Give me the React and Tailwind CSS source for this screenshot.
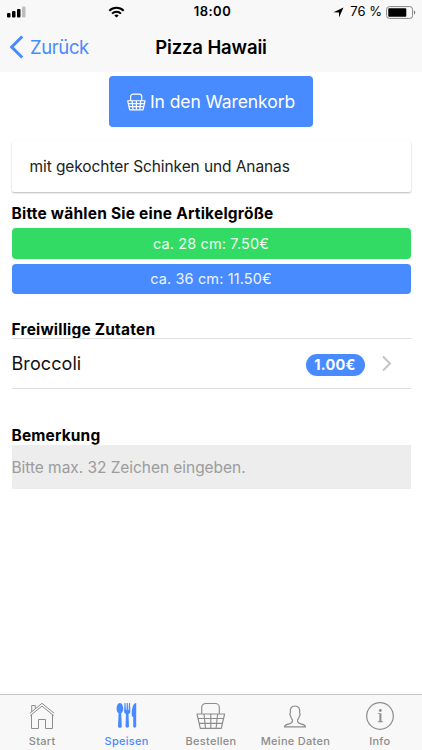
function Basket({ className, strokeWidth = 1.15 }) {
  return (
    <svg className={className} viewBox="0 0 30 28" fill="none" stroke="currentColor" strokeWidth={strokeWidth} strokeLinejoin="round">
      <path d="M5.700 12V5.500a4 4 0 0 1 4-4h9.600a4 4 0 0 1 4 4V12" />
      <path d="M.6 12h28.400M2.300 16.500h25M3.200 21.300h23M1 12l3.300 14.300h21L28.600 12" />
      <path d="M8 12l1.500 14.300M14.800 12v14.300M21.600 12l-1.500 14.300" />
    </svg>
  );
}

function House() {
  return (
    <svg className="h-[28px] w-[28px]" viewBox="0 0 28 28" fill="none" stroke="currentColor" strokeWidth="1">
      <path d="M1.800 12.300 14 2.300l12.200 10" />
      <path d="M2.300 14.600 14 5.100l11.700 9.500" />
      <path d="M3.700 10.700V4.500h3.600v3.200M3.500 13.700V27.500h7V18.500h7v9h7V13.700" />
    </svg>
  );
}

function Cutlery() {
  return (
    <svg className="h-[26px] w-[22px]" viewBox="0 0 22 26" fill="currentColor">
      <path d="M3.900 1C6 1 7.200 3.900 7.200 6.700c0 2.300-.8 3.800-2 4.500l.6 13c.1 2.100-3.900 2.100-3.800 0l.6-13C1.300 10.500.6 9 .6 6.700.6 3.900 1.800 1 3.900 1Z" />
      <path d="M8.500 1h1l.4 7h.6L10.700 1h1.100l.2 7h.6L13 1h1l.4 8c0 1.800-.8 2.600-1.900 3.100l.5 12.100c.1 2-3.600 2-3.500 0L10 12.100C8.900 11.600 8.100 10.800 8.100 9Z" />
      <path d="M20.200 1v23.500c0 1.500-3 1.500-3 0V15c-1-.4-1.500-1.200-1.500-2.600C15.700 7 16.800 1 20.200 1Z" />
    </svg>
  );
}

function Person() {
  return (
    <svg className="h-[24px] w-[24px]" viewBox="0 0 24 24" fill="none" stroke="currentColor" strokeWidth="1.200" strokeLinejoin="round">
      <path d="M9.500 16.200c-.1-1-1.500-1.500-1.900-4.200C6.700 11 6.700 9.400 7.400 9 6.700 4.500 8.200 2 12 2s5.300 2.500 4.600 7c.7.400.7 2-.2 3-.4 2.700-1.800 3.200-1.900 4.200-.2 2.300.9 2.900 3.300 3.600 2.700.8 4.400.9 4.700 3.100h-21c.3-2.200 2-2.300 4.700-3.100 2.400-.7 3.500-1.300 3.300-3.600Z" />
    </svg>
  );
}

function Info() {
  return (
    <svg className="h-[28px] w-[28px]" viewBox="0 0 28 28">
      <circle cx="14" cy="14" r="13.300" fill="none" stroke="currentColor" strokeWidth="1.200" />
      <path d="M11.800 11.200h3.600v8.100h1.500v.9h-5.100v-.9h1.600v-7.200h-1.600Z" fill="currentColor" />
      <circle cx="14.300" cy="8.500" r="1.400" fill="currentColor" />
    </svg>
  );
}

function Tab({ label, active, children }) {
  return (
    <div className={`flex flex-1 flex-col items-center ${active ? "text-[#488aff]" : "text-[#8c8c8c]"}`}>
      <div className="flex h-[37px] items-end justify-center">{children}</div>
      <span className="mt-[2px] whitespace-nowrap text-[11px] leading-[14px] font-medium tracking-[0.280px]">{label}</span>
    </div>
  );
}

export default function App() {
  return (
    <div className="flex h-[750px] w-[422px] flex-col overflow-hidden bg-white font-['Inter','Liberation_Sans',sans-serif] text-black">
      <header className="h-[72px] shrink-0 bg-[#f8f8f8]">
        <div className="grid h-[24px] grid-cols-3 items-center">
          <div className="flex items-center pl-[7px]">
            <svg className="h-[12px] w-[19px]" viewBox="0 0 19 12">
              <rect x="0" y="7" width="3.500" height="4.500" rx="1" />
              <rect x="5" y="5" width="3.500" height="6.500" rx="1" />
              <rect x="10" y="3" width="3.500" height="8.500" rx="1" />
              <rect x="15" y="0.500" width="3.500" height="11" rx="1" fill="#bdbdbd" />
            </svg>
            <svg className="ml-[82px] h-[12px] w-[17px]" viewBox="0 0 17 12" fill="none" stroke="black" strokeWidth="2">
              <path d="M1.300 4.700a10.300 10.300 0 0 1 14.400 0M4 7.600a6.400 6.400 0 0 1 9 0" />
              <path d="M8.500 11.500 6.300 9.500a3.200 3.200 0 0 1 4.400 0Z" fill="black" stroke="none" />
            </svg>
          </div>
          <span className="pl-[3px] text-center text-[13px] font-semibold tracking-[0.450px]">18:00</span>
          <div className="flex items-center justify-end pr-[6px]">
            <svg className="h-[11px] w-[11px]" viewBox="0 0 11 11"><path d="M10.500.5 6 10.500V5.500L.5 5.300Z" /></svg>
            <span className="ml-[6px] whitespace-nowrap text-[13px]">76 %</span>
            <svg className="ml-[4px] h-[13px] w-[30px]" viewBox="0 0 30 13">
              <rect x=".6" y=".6" width="26" height="11.800" rx="2.800" fill="none" stroke="#858585" />
              <rect x="2.300" y="2.300" width="18" height="8.400" rx=".8" />
              <path d="M28 4.500c1.700.7 1.700 3.300 0 4Z" fill="#777" />
            </svg>
          </div>
        </div>
        <div className="grid h-[46px] grid-cols-[100px_1fr_100px] items-center">
          <div className="flex items-center pl-[9px] text-[#488aff]">
            <svg className="h-[24px] w-[15px]" viewBox="0 0 15 24" fill="none" stroke="currentColor" strokeWidth="3"><path d="M13.200 1.500 2.700 12l10.500 10.500" /></svg>
            <span className="ml-[6px] pt-[1px] text-[18.500px] tracking-[-0.400px]">Zurück</span>
          </div>
          <h1 className="pt-[1px] text-center text-[18.500px] font-semibold tracking-[-0.130px]">Pizza Hawaii</h1>
        </div>
      </header>

      <main className="flex flex-1 flex-col px-[11.500px] pt-[4px]">
        <button className="flex h-[51px] w-[204px] shrink-0 items-center justify-center self-center rounded-[4px] bg-[#488aff] text-white">
          <Basket className="h-[18px] w-[19px]" strokeWidth={1.9} />
          <span className="ml-[4px] pt-[1px] whitespace-nowrap text-[17.500px] tracking-[-0.080px]">In den Warenkorb</span>
        </button>

        <div className="mt-[14px] flex h-[51px] shrink-0 items-center rounded-[2px] bg-white pl-[18px] text-[15.500px] tracking-[-0.090px] text-[#222] shadow-[0_1px_2px_rgba(0,0,0,0.28)]">
          <span className="whitespace-nowrap">mit gekochter Schinken und Ananas</span>
        </div>

        <h2 className="mt-[11px] h-[22px] whitespace-nowrap text-[15.500px] leading-[22px] font-bold tracking-[0.220px]">Bitte wählen Sie eine Artikelgröße</h2>
        <button className="mt-[3px] h-[31px] shrink-0 rounded-[4px] bg-[#32db64] text-[14.500px] tracking-[0.130px] text-white/90">ca. 28 cm: 7.50€</button>
        <button className="mt-[5px] h-[30px] shrink-0 rounded-[4px] bg-[#488aff] text-[14.500px] tracking-[0.130px] text-white/90">ca. 36 cm: 11.50€</button>

        <h2 className="mt-[25px] h-[19px] text-[15.500px] leading-[21px] font-bold tracking-[0.200px]">Freiwillige Zutaten</h2>
        <div className="flex h-[51px] shrink-0 items-center border-y border-[#dedede]">
          <span className="flex-1 text-[18px] tracking-[0.080px] text-[#111]">Broccoli</span>
          <span className="mt-[3px] flex h-[22px] w-[59px] items-center justify-center rounded-full bg-[#488aff] text-[14.500px] font-bold tracking-[0.250px] text-white">1.00€</span>
          <svg className="mr-[19px] ml-[17px] h-[17px] w-[10px]" viewBox="0 0 10 17" fill="none" stroke="#c4c4c8" strokeWidth="2"><path d="m1 1.500 7 7-7 7" /></svg>
        </div>

        <h2 className="mt-[36px] h-[20px] text-[15.500px] leading-[21px] font-bold tracking-[0.150px]">Bemerkung</h2>
        <div className="flex h-[44px] shrink-0 items-center bg-[#ededed] pt-[1px] text-[15.500px] tracking-[-0.050px] text-[#9c9c9c]">Bitte max. 32 Zeichen eingeben.</div>
      </main>

      <nav className="flex h-[56px] shrink-0 border-t border-[#c4c4c4] bg-[#f8f8f8]">
        <Tab label="Start"><div className="mb-[3px]"><House /></div></Tab>
        <Tab label="Speisen" active><div className="mb-[4px]"><Cutlery /></div></Tab>
        <Tab label="Bestellen"><div className="mb-[2px]"><Basket className="h-[28px] w-[30px]" /></div></Tab>
        <Tab label="Meine Daten"><div className="mb-[4px]"><Person /></div></Tab>
        <Tab label="Info"><div className="mb-[2px]"><Info /></div></Tab>
      </nav>
    </div>
  );
}
